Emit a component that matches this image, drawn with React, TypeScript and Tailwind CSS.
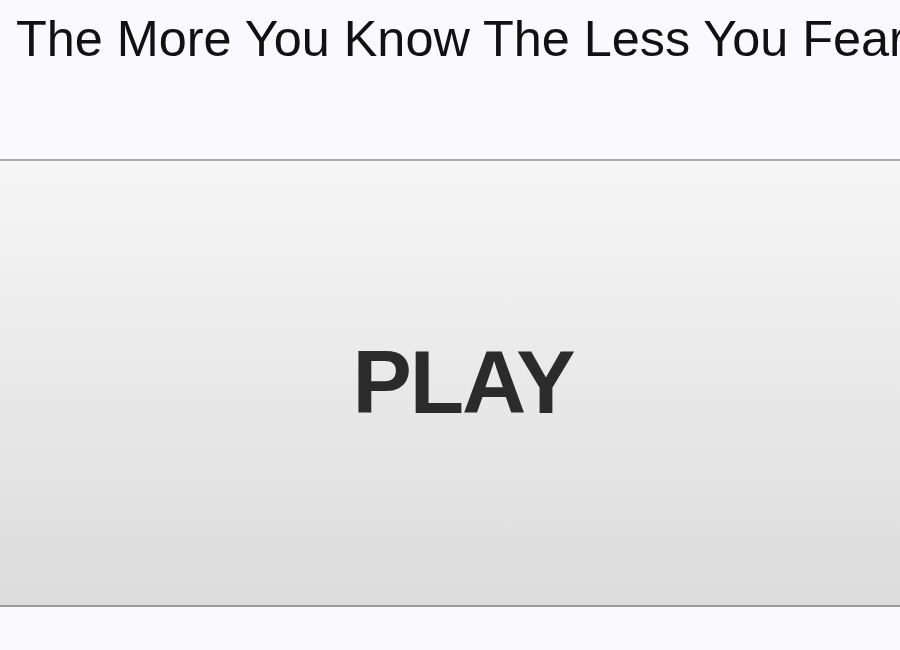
export default function App() {
  return (
    <div className="h-[650px] w-[900px] overflow-hidden bg-[#f9f9fe] font-['Liberation_Sans',Arial,sans-serif]">
      {/* Heading */}
      <h1 className="h-[159px] whitespace-nowrap pl-[16px] pt-px text-[50.4px] font-normal leading-normal text-[#111]">
        The More You Know The Less You Fear
      </h1>

      {/* Play button */}
      <button className="flex h-[448px] w-full items-center justify-center border-y-2 border-t-[#a9a9a9] border-b-[#9a9a9a] bg-gradient-to-b from-[#f6f6f6] to-[#dcdcdc] pl-[26px] text-[89px] font-bold tracking-[-2px] text-[#2b2b2b]">
        PLAY
      </button>
    </div>
  );
}
